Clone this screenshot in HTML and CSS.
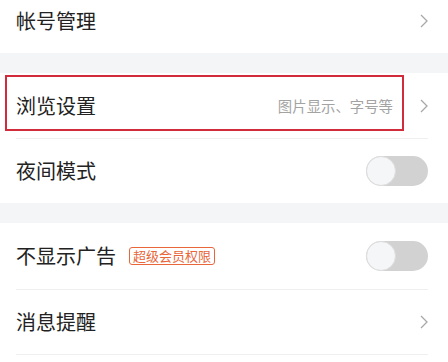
FILE: index.html
```html
<!DOCTYPE html>
<html lang="zh">
<head>
<meta charset="utf-8">
<link rel="stylesheet" href="styles.css">
</head>
<body>
<div class="page">
  <div class="group">
    <div class="row">
      <span class="label">帐号管理</span>
      <span class="right"><svg class="chev" width="8" height="14" viewBox="0 0 8 14"><polyline points="1,1 7,7 1,13" fill="none" stroke="#a8a8a8" stroke-width="1.3"/></svg></span>
    </div>
  </div>
  <div class="gap"></div>
  <div class="group">
    <div class="row">
      <span class="label">浏览设置</span>
      <span class="right"><span class="hint">图片显示、字号等</span><svg class="chev" width="8" height="14" viewBox="0 0 8 14"><polyline points="1,1 7,7 1,13" fill="none" stroke="#a8a8a8" stroke-width="1.3"/></svg></span>
      <div class="mark"></div>
    </div>
    <div class="row divided">
      <span class="label">夜间模式</span>
      <span class="toggle"><span class="knob"></span></span>
    </div>
  </div>
  <div class="gap"></div>
  <div class="group">
    <div class="row tall">
      <span class="label">不显示广告<span class="badge">超级会员权限</span></span>
      <span class="toggle"><span class="knob"></span></span>
    </div>
    <div class="row tall divided last">
      <span class="label">消息提醒</span>
      <span class="right"><svg class="chev" width="8" height="14" viewBox="0 0 8 14"><polyline points="1,1 7,7 1,13" fill="none" stroke="#a8a8a8" stroke-width="1.3"/></svg></span>
    </div>
  </div>
</div>
</body>
</html>
```

FILE: styles.css
```css
html, body {
  margin: 0;
  padding: 0;
  background: #ffffff;
}
body {
  width: 448px;
  height: 362px;
  overflow: hidden;
  font-family: "Noto Sans CJK SC", "Noto Sans", sans-serif;
  color: #222222;
}
.page {
  margin-top: -12px;
}
.group {
  background: #ffffff;
  padding: 0 20px 0 16px;
}
.gap {
  height: 20px;
  background: #f4f5f7;
}
.row {
  position: relative;
  box-sizing: border-box;
  height: 65px;
  display: flex;
  align-items: center;
  justify-content: space-between;
}
.tall {
  height: 66px;
}
.divided {
  border-top: 1px solid #efefef;
}
.last {
  border-bottom: 1px solid #efefef;
}
.label {
  font-size: 20px;
  line-height: 1;
  display: flex;
  align-items: center;
}
.right {
  display: flex;
  align-items: center;
}
.hint {
  font-size: 14.4px;
  color: #a3a3a3;
  margin-right: 27px;
}
.chev {
  display: block;
}
.mark {
  position: absolute;
  left: -11px;
  top: 2px;
  width: 395px;
  height: 52px;
  border: 2px solid #d12b3c;
  pointer-events: none;
}
.toggle {
  width: 62px;
  height: 30px;
  border-radius: 15px;
  background: #d2d2d2;
  display: flex;
  align-items: center;
}
.knob {
  width: 28px;
  height: 28px;
  border-radius: 50%;
  background: #f5f6f8;
  border: 1px solid #dddddd;
}
.badge {
  margin-left: 13px;
  font-size: 13px;
  line-height: 16px;
  color: #e8663a;
  border: 1px solid #e8663a;
  border-radius: 3px;
  padding: 0 3px;
}
```
